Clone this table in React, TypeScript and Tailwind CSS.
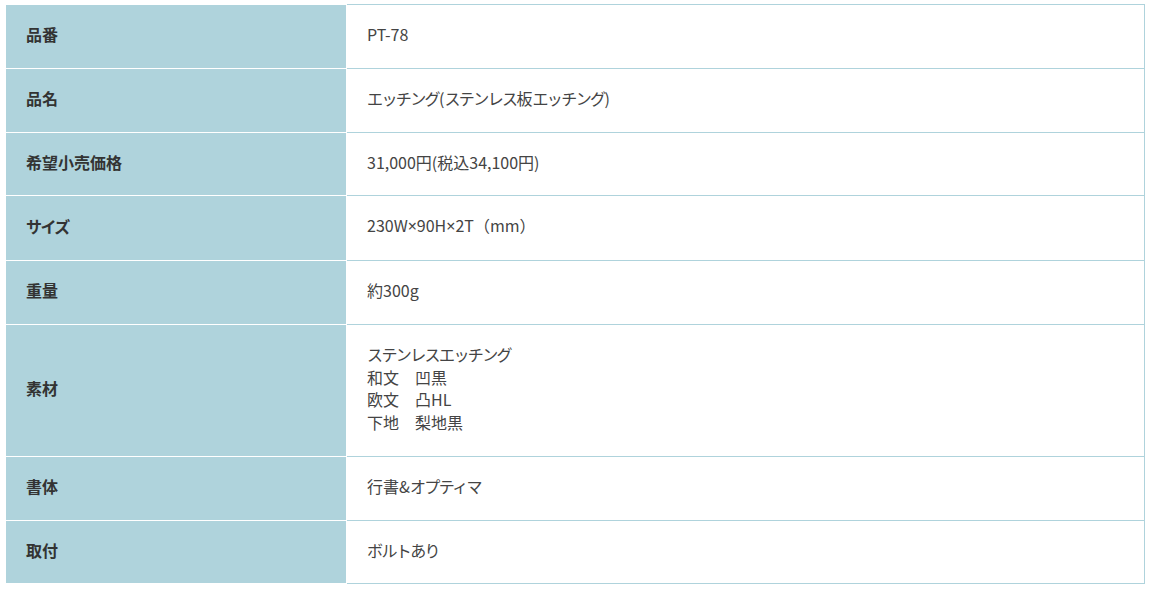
import React from 'react';

interface SpecRow {
  label: string;
  lines: string[];
}

const rows: SpecRow[] = [
  { label: '品番', lines: ['PT-78'] },
  { label: '品名', lines: ['エッチング(ステンレス板エッチング)'] },
  { label: '希望小売価格', lines: ['31,000円(税込34,100円)'] },
  { label: 'サイズ', lines: ['230W×90H×2T（mm）'] },
  { label: '重量', lines: ['約300g'] },
  { label: '素材', lines: ['ステンレスエッチング', '和文　凹黒', '欧文　凸HL', '下地　梨地黒'] },
  { label: '書体', lines: ['行書&オプティマ'] },
  { label: '取付', lines: ['ボルトあり'] },
];

// kana in the original font sit a little tighter than in Noto CJK, so tighten those runs
const Jp: React.FC<{ text: string }> = ({ text }) => {
  const parts = text.split(/([\u30A0-\u30FF\u3040-\u309F]+|×)/).filter(Boolean);
  return (
    <>
      {parts.map((p, i) => {
        if (p === '×') {
          return (
            <span key={i} className="font-['Noto_Sans',sans-serif]">
              {p}
            </span>
          );
        }
        if (/^[\u30A0-\u30FF\u3040-\u309F]+$/.test(p)) {
          return (
            <span key={i} className="tracking-[-1.6px]">
              {p}
            </span>
          );
        }
        return <React.Fragment key={i}>{p}</React.Fragment>;
      })}
    </>
  );
};

const App: React.FC = () => {
  return (
    <div className="min-h-screen bg-white pt-[4px] pl-[5px] font-['Noto_Sans_CJK_JP','Noto_Sans',sans-serif]">
      <table className="w-[1140px] border-collapse text-[16px] leading-[22.75px]">
        <tbody>
          {rows.map((row) => (
            <tr key={row.label}>
              {/* Label cell */}
              <th className="w-[341px] border border-white bg-[#afd3dc] px-5 pt-[18px] pb-[22px] text-left align-middle font-bold text-[#333]">
                <Jp text={row.label} />
              </th>
              {/* Value cell */}
              <td className="border border-[#afd3dc] px-5 pt-[18px] pb-[22px] align-middle text-[#444]">
                {row.lines.map((line) => (
                  <div key={line}>
                    <Jp text={line} />
                  </div>
                ))}
              </td>
            </tr>
          ))}
        </tbody>
      </table>
    </div>
  );
};

export default App;
